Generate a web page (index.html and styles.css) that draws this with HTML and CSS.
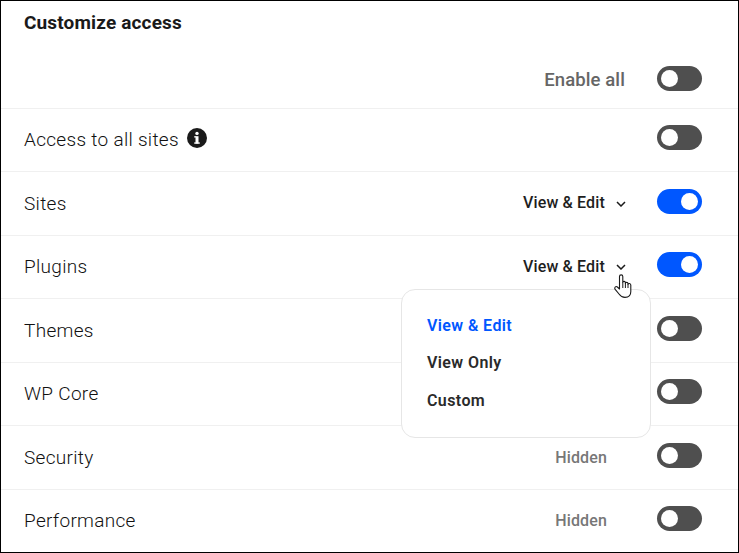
FILE: index.html
```
<!DOCTYPE html>
<html lang="en">
<head>
<meta charset="utf-8">
<title>Customize access</title>
<link rel="stylesheet" href="styles.css">
</head>
<body>
<main class="panel">
  <h2 class="title">Customize access</h2>
  <div class="row row-head">
    <span class="enable">Enable all</span>
    <span class="toggle"></span>
  </div>
  <div class="row">
    <span class="label">Access to all sites</span>
    <svg class="info" viewBox="0 0 20 20" aria-hidden="true"><circle cx="10" cy="10" r="10" fill="#1a1a1a"/><rect x="8.5" y="8.2" width="3" height="7.4" fill="#fff"/><rect x="7.2" y="8.2" width="2" height="1.3" fill="#fff"/><rect x="7.2" y="14.4" width="5.6" height="1.3" fill="#fff"/><circle cx="10" cy="5.4" r="1.7" fill="#fff"/></svg>
    <span class="toggle"></span>
  </div>
  <div class="row">
    <span class="label">Sites</span>
    <span class="perm">View &amp; Edit</span>
    <svg class="chev" viewBox="0 0 10 6" aria-hidden="true"><path d="M1 1l4 4 4-4" fill="none" stroke="#1a1a1a" stroke-width="1.5"/></svg>
    <span class="toggle on"></span>
  </div>
  <div class="row">
    <span class="label">Plugins</span>
    <span class="perm">View &amp; Edit</span>
    <svg class="chev" viewBox="0 0 10 6" aria-hidden="true"><path d="M1 1l4 4 4-4" fill="none" stroke="#1a1a1a" stroke-width="1.5"/></svg>
    <span class="toggle on"></span>
  </div>
  <div class="row">
    <span class="label">Themes</span>
    <span class="toggle"></span>
  </div>
  <div class="row">
    <span class="label">WP Core</span>
    <span class="toggle"></span>
  </div>
  <div class="row">
    <span class="label">Security</span>
    <span class="hidden">Hidden</span>
    <span class="toggle"></span>
  </div>
  <div class="row">
    <span class="label">Performance</span>
    <span class="hidden">Hidden</span>
    <span class="toggle"></span>
  </div>
  <ul class="menu">
    <li class="menu-item active">View &amp; Edit</li>
    <li class="menu-item">View Only</li>
    <li class="menu-item">Custom</li>
  </ul>
  <svg class="cursor" viewBox="0 0 18 24" aria-hidden="true"><path d="M5.5 14V2.4C5.5 .4 8.8 .4 8.8 2.4V8.5C8.8 7 11.4 7 11.4 8.8V9.4C11.4 8 14 8 14 9.6V10.4C14 9 16.8 9.2 16.8 11V17.5C16.8 21 15 23.4 11 23.4C7.5 23.4 6.4 22 5 20L1.2 15.4C0 13.6 1.8 11.6 3.4 13L5.5 15Z" fill="#fff" stroke="#1a1a1a" stroke-width="1.1" stroke-linejoin="round"/><path d="M8.8 8.5V14M11.4 9.4V14M14 10.4V14" fill="none" stroke="#1a1a1a" stroke-width="1"/></svg>
</main>
</body>
</html>
```
FILE: styles.css
```
* { box-sizing: border-box; }
html, body { margin: 0; padding: 0; background: #fff; }
body { font-family: Roboto, "Liberation Sans", sans-serif; color: #1e1e1e; }
.panel {
  position: relative;
  width: 739px;
  height: 553px;
  border: 1px solid #000;
  overflow: hidden;
  background: #fff;
}
.title {
  margin: 0;
  padding: 12px 23px 0;
  height: 44px;
  font-size: 19px;
  line-height: 20px;
  font-weight: 700;
  letter-spacing: 0.15px;
  color: #1a1a1a;
}
.row {
  display: flex;
  align-items: center;
  height: 63.5px;
  padding: 0 36px 0 23px;
  border-bottom: 1px solid #f0f0f0;
}
.row:last-of-type { border-bottom: 0; padding-bottom: 2px; }
.row-head { justify-content: flex-end; padding-top: 6px; }
.label { font-size: 19px; letter-spacing: 0.3px; font-weight: 300; color: #111; margin-right: auto; }
.row .info + .toggle { margin-left: auto; }
.row:has(.info) .label { margin-right: 8px; }
.info { width: 20px; height: 20px; margin-top: -4px; }
.enable { font-size: 18.5px; font-weight: 500; letter-spacing: 0.1px; color: #666; margin: 2px 32px 0 0; }
.perm { font-size: 16px; font-weight: 500; letter-spacing: 0.15px; color: #1e1e1e; margin-top: -1px; }
.chev { width: 10px; height: 6px; margin: 1px 31px 0 11px; }
.hidden { font-size: 16px; font-weight: 500; letter-spacing: 0.15px; color: #777; margin-right: 50px; }
.toggle {
  position: relative;
  flex: none;
  width: 45px;
  height: 25px;
  margin-top: -4px;
  border-radius: 13px;
  background: #4f4f4f;
}
.row-head .toggle { margin-top: -2px; }
.toggle::after {
  content: "";
  position: absolute;
  top: 4px;
  left: 4px;
  width: 17px;
  height: 17px;
  border-radius: 50%;
  background: #fff;
}
.toggle.on { background: #0057ff; }
.toggle.on::after { left: 24px; }
.menu {
  position: absolute;
  left: 400px;
  top: 288px;
  width: 250px;
  height: 149px;
  margin: 0;
  padding: 16.6px 25px;
  list-style: none;
  background: #fff;
  border: 1px solid #e6e6e6;
  border-radius: 14px;
}
.menu-item {
  height: 37.5px;
  line-height: 37.5px;
  font-size: 16px;
  font-weight: 600;
  letter-spacing: 0.4px;
  color: #2a2a2a;
}
.menu-item.active { color: #0057ff; }
.cursor { position: absolute; left: 613px; top: 273px; width: 18px; height: 24px; }
```
